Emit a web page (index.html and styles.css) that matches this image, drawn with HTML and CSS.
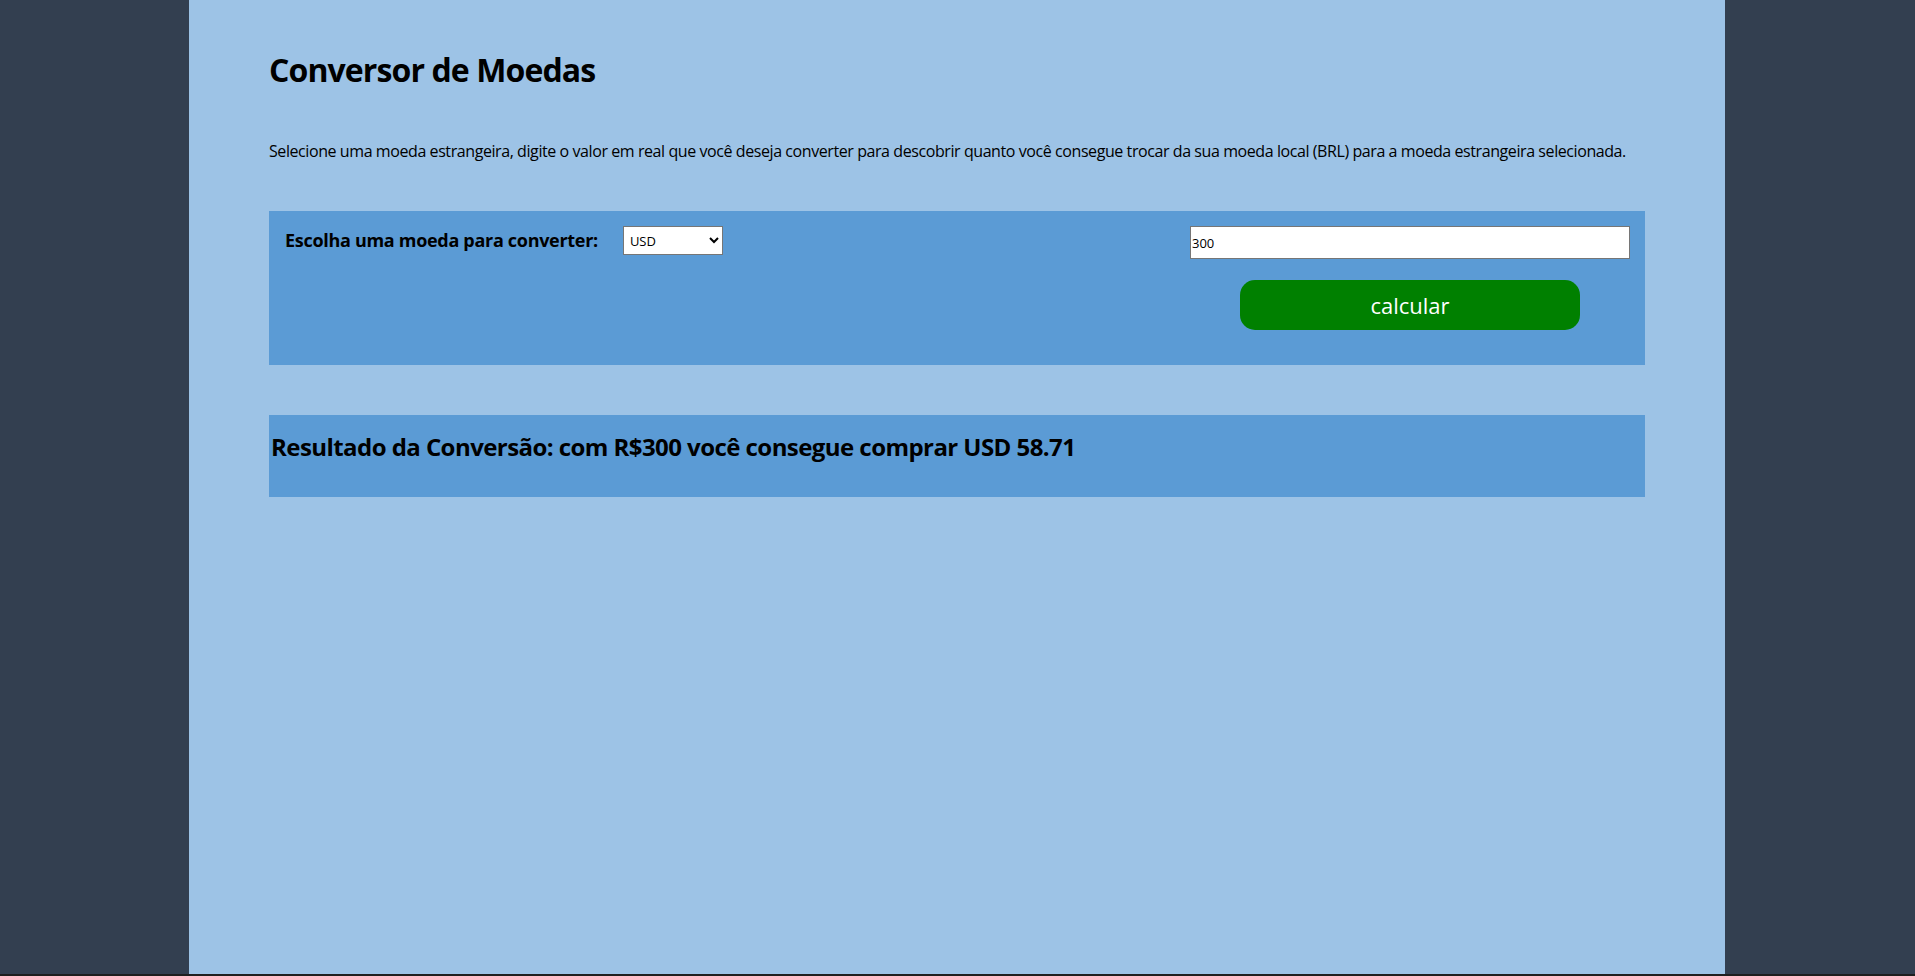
FILE: index.html
```html
<!DOCTYPE html>
<html lang="pt-BR">
<head>
<meta charset="utf-8">
<title>Conversor de Moedas</title>
<link rel="stylesheet" href="styles.css">
</head>
<body>
<main class="page">
  <h1 class="title">Conversor de Moedas</h1>
  <p class="intro">Selecione uma moeda estrangeira, digite o valor em real que você deseja converter para descobrir quanto você consegue trocar da sua moeda local (BRL) para a moeda estrangeira selecionada.</p>
  <form class="panel">
    <div class="choose">
      <label class="choose-label" for="moeda">Escolha uma moeda para converter:</label>
      <select class="currency" id="moeda">
        <option>USD</option>
        <option>EUR</option>
        <option>GBP</option>
      </select>
    </div>
    <div class="amount">
      <input class="value" type="text" value="300">
      <button class="calc" type="button">calcular</button>
    </div>
  </form>
  <section class="result">
    <h2 class="result-text">Resultado da Conversão: com R$300 você consegue comprar USD 58.71</h2>
  </section>
</main>
<div class="bottom-strip"></div>
</body>
</html>
```
FILE: styles.css
```css
html, body {
  margin: 0;
  padding: 0;
}
body {
  background: #333f50;
  font-family: "Open Sans", "Noto Sans", sans-serif;
  color: #000;
  overflow: hidden;
}
.page {
  width: 1536px;
  min-height: 974px;
  margin: 0 0 0 189px;
  padding: 50px 80px 0;
  box-sizing: border-box;
  background: #9dc3e6;
  display: flex;
  flex-direction: column;
}
.title {
  margin: 0;
  font-size: 32px;
  line-height: 40px;
  font-weight: 700;
  letter-spacing: -0.9px;
}
.intro {
  margin: 50px 0 0;
  font-size: 16px;
  line-height: 22px;
  letter-spacing: -0.42px;
  white-space: nowrap;
}
.panel {
  margin-top: 49px;
  background: #5b9bd5;
  padding: 15px 15px 35px 16px;
  display: flex;
  justify-content: space-between;
  align-items: flex-start;
}
.choose {
  display: flex;
  align-items: flex-start;
  gap: 25px;
}
.choose-label {
  font-size: 18px;
  font-weight: 700;
  line-height: 29px;
  letter-spacing: -0.3px;
}
.currency {
  width: 100px;
  height: 29px;
  font-family: "Open Sans", sans-serif;
  font-size: 13px;
  border: 1px solid #767676;
  border-radius: 0;
  background: #fff;
  color: #000;
  padding: 0 2px;
}
.amount {
  width: 440px;
  display: flex;
  flex-direction: column;
  align-items: center;
  gap: 21px;
}
.value {
  width: 100%;
  height: 33px;
  box-sizing: border-box;
  border: 1px solid #767676;
  background: #fff;
  font-family: "Open Sans", sans-serif;
  font-size: 13px;
  padding: 0 1px;
  color: #000;
}
.calc {
  width: 340px;
  height: 50px;
  border: none;
  border-radius: 15px;
  background: #008000;
  color: #fff;
  font-family: "Open Sans", sans-serif;
  font-size: 22px;
  cursor: pointer;
}
.result {
  margin-top: 50px;
  background: #5b9bd5;
  padding: 16px 0 34px 2px;
}
.result-text {
  margin: 0;
  font-size: 24px;
  line-height: 32px;
  font-weight: 700;
  letter-spacing: -0.56px;
}
.bottom-strip {
  height: 2px;
  background: #1f1f1f;
}
```
